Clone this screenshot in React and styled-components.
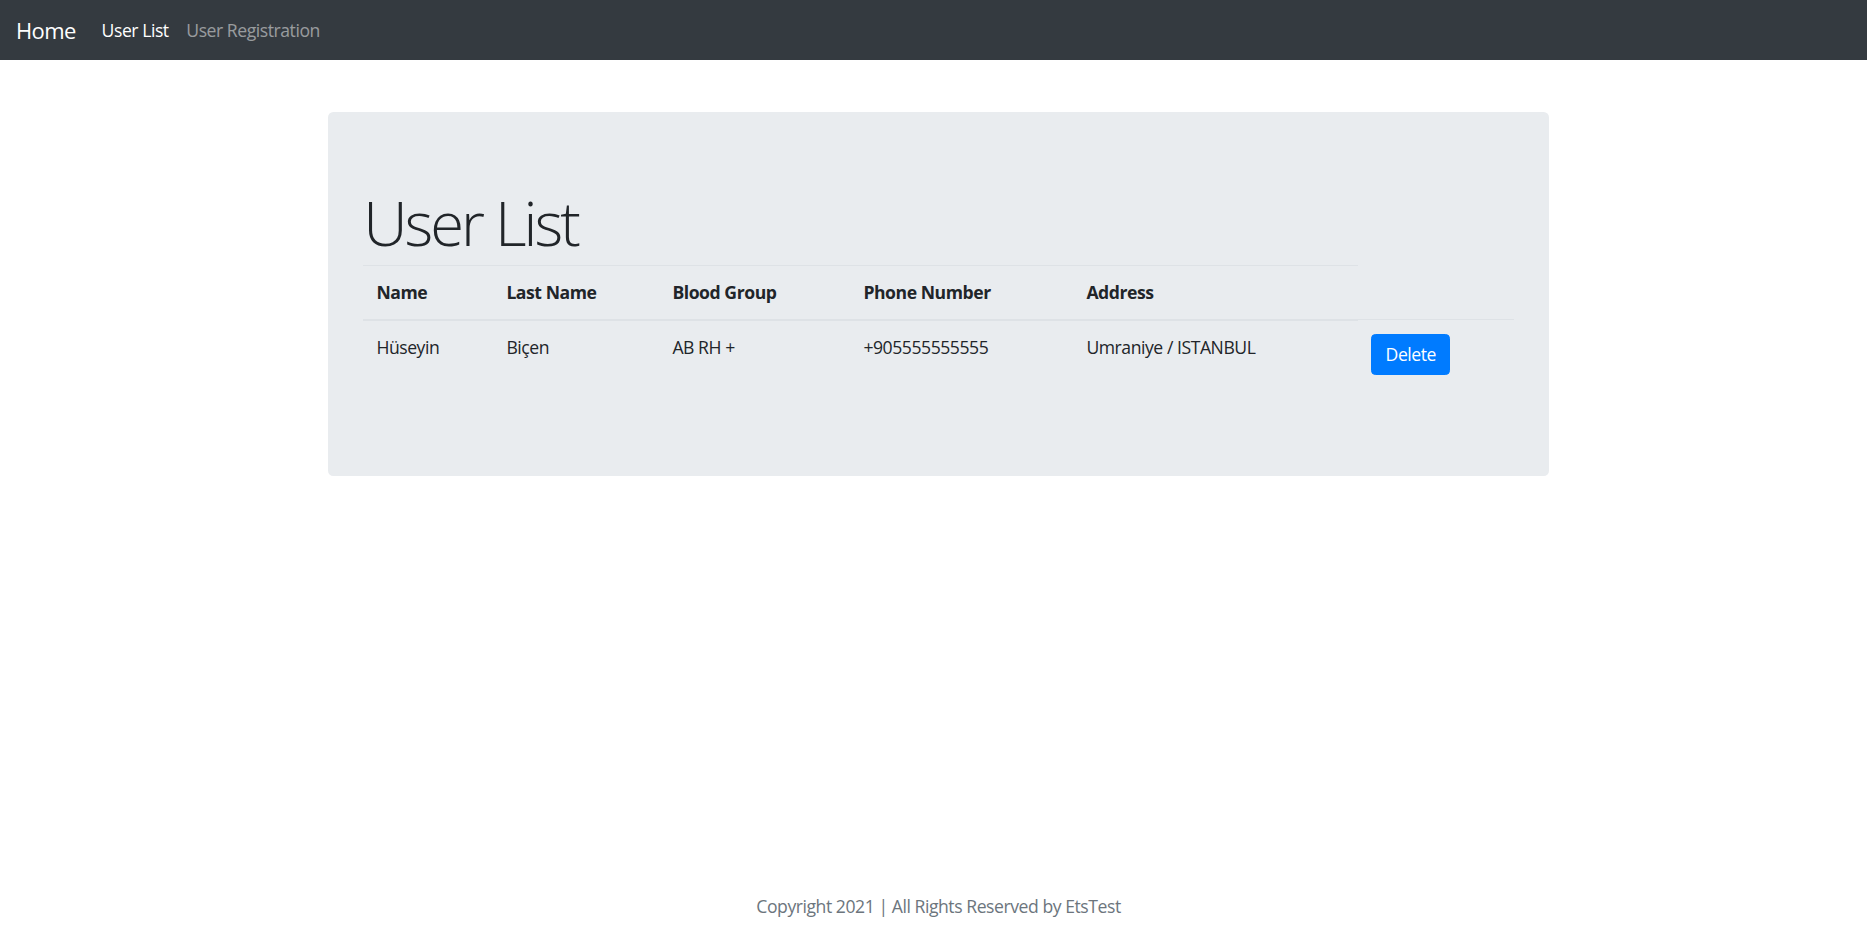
import React, { useState } from "react";
import styled, { createGlobalStyle } from "styled-components";

const GlobalStyle = createGlobalStyle`
    * { box-sizing: border-box; }
    html, body { margin: 0; padding: 0; }
    body {
        font-family: "Segoe UI", "Open Sans", "Noto Sans", sans-serif;
        font-size: 17.6px;
        line-height: 1.5;
        letter-spacing: -0.45px;
        color: #212529;
        background-color: #fff;
    }
    #root { min-height: 100vh; display: flex; flex-direction: column; }
`;

const Navbar = styled.nav`
    height: 60px;
    background-color: #343a40;
    display: flex;
    align-items: center;
    padding: 0 16px;
`;

const Brand = styled.a`
    font-size: 22px;
    line-height: 1.5;
    letter-spacing: -0.6px;
    color: #fff;
    margin-right: 17px;
    text-decoration: none;
    cursor: pointer;
`;

const NavLinks = styled.div`
    display: flex;
    align-items: center;
`;

const NavLink = styled.a`
    padding: 8.8px;
    color: ${(p) => (p.active ? "#fff" : "rgba(255, 255, 255, 0.5)")};
    text-decoration: none;
    cursor: pointer;
`;

const Page = styled.div`
    flex: 1;
    display: flex;
    flex-direction: column;
    padding-left: 10px;
`;

const Jumbotron = styled.div`
    width: 1221px;
    margin: 52px auto 0;
    background-color: #e9ecef;
    border-radius: 5.3px;
    padding: 70.4px 35.2px;
`;

const Title = styled.h1`
    margin: 0 0 5.3px;
    padding-top: 3.5px;
    font-size: 61.6px;
    font-weight: 300;
    line-height: 1.2;
    letter-spacing: -3px;
`;

const Table = styled.table`
    width: 100%;
    border-collapse: collapse;
    table-layout: fixed;
    margin-bottom: 17.6px;
    color: #212529;
`;

const Col = styled.col`
    width: ${(p) => p.w}px;
`;

const Th = styled.th`
    text-align: left;
    font-weight: 700;
    padding: 13.2px;
    line-height: 26.4px;
    vertical-align: bottom;
    border-top: 1px solid #dee2e6;
    border-bottom: 2px solid #dee2e6;
`;

const Td = styled.td`
    padding: 13.2px;
    line-height: 26.4px;
    vertical-align: top;
    border-top: 1px solid #dee2e6;
`;

const DeleteButton = styled.button`
    font-family: inherit;
    font-size: 17.6px;
    letter-spacing: -0.45px;
    line-height: 26.4px;
    padding: 6.6px 13.2px;
    color: #fff;
    background-color: #007bff;
    border: 1.1px solid #007bff;
    border-radius: 4.4px;
    cursor: pointer;
`;

const Footer = styled.footer`
    margin-top: auto;
    padding-bottom: 16px;
    text-align: center;
    color: #6c757d;
`;

const columns = ["Name", "Last Name", "Blood Group", "Phone Number", "Address"];
const widths = [130, 166, 191, 223, 285, 156];

const App = () => {
    // users shown in the table
    const [users, setUsers] = useState([
        {
            id: 1,
            name: "Hüseyin",
            lastName: "Biçen",
            bloodGroup: "AB RH +",
            phone: "+905555555555",
            address: "Umraniye / ISTANBUL",
        },
    ]);

    const deleteUser = (id) => {
        setUsers(users.filter((u) => u.id !== id));
    };

    return (
        <>
            <GlobalStyle />
            <Navbar>
                <Brand>Home</Brand>
                <NavLinks>
                    <NavLink active>User List</NavLink>
                    <NavLink>User Registration</NavLink>
                </NavLinks>
            </Navbar>
            <Page>
                <Jumbotron>
                    <Title>User List</Title>
                    <Table>
                        <colgroup>
                            {widths.map((w, i) => (
                                <Col key={i} w={w} />
                            ))}
                        </colgroup>
                        <thead>
                            <tr>
                                {columns.map((c) => (
                                    <Th key={c}>{c}</Th>
                                ))}
                            </tr>
                        </thead>
                        <tbody>
                            {users.map((u) => (
                                <tr key={u.id}>
                                    <Td>{u.name}</Td>
                                    <Td>{u.lastName}</Td>
                                    <Td>{u.bloodGroup}</Td>
                                    <Td>{u.phone}</Td>
                                    <Td>{u.address}</Td>
                                    <Td>
                                        <DeleteButton onClick={() => deleteUser(u.id)}>Delete</DeleteButton>
                                    </Td>
                                </tr>
                            ))}
                        </tbody>
                    </Table>
                </Jumbotron>
                <Footer>Copyright 2021 | All Rights Reserved by EtsTest</Footer>
            </Page>
        </>
    );
};

export default App;
